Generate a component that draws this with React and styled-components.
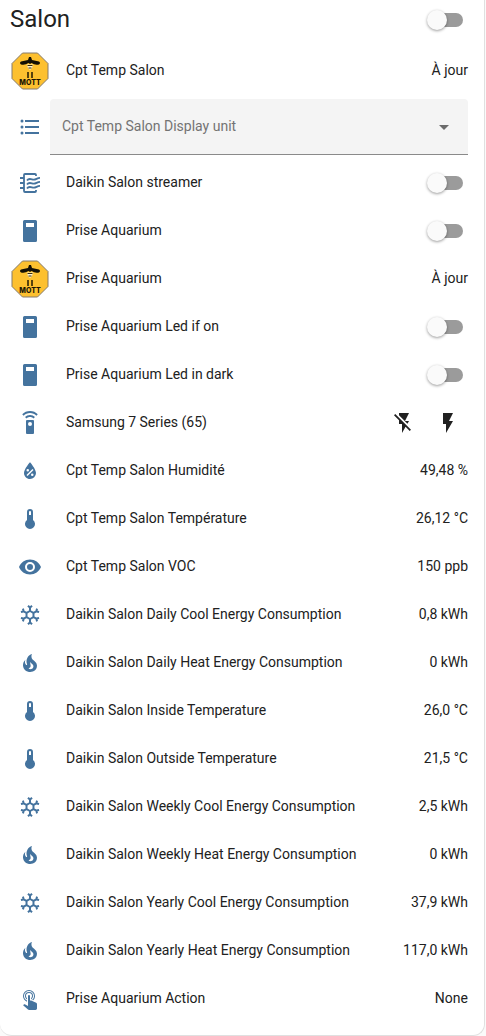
import React from 'react';
import styled, { createGlobalStyle } from 'styled-components';

const Global = createGlobalStyle`
  * { box-sizing: border-box; }
  body {
    margin: 0;
    background: #fafafa;
    color: #212121;
    font-family: Roboto, "Noto Sans", sans-serif;
    font-size: 14px;
    line-height: 20px;
  }
`;

const Card = styled.main`
  margin-right: 1px;
  padding-bottom: 17px;
  background: #fff;
  border: solid #e0e0e0;
  border-width: 0 1px 1px 0;
  border-radius: 0 0 12px 12px;
`;

const Header = styled.header`
  display: flex;
  align-items: center;
  justify-content: space-between;
  height: 38px;
  padding: 0 16px 0 10px;
`;

const Title = styled.h1`
  margin: 0;
  font-size: 24px;
  font-weight: 400;
  line-height: 32px;
`;

const Rows = styled.div`
  display: flex;
  flex-direction: column;
  gap: 8px;
  padding: 12px 16px 0 10px;
`;

const Row = styled.div`
  display: flex;
  align-items: center;
  min-height: 40px;
`;

const IconSlot = styled.span`
  display: flex;
  flex: none;
  align-items: center;
  justify-content: center;
  width: 40px;
  height: 40px;
  padding-top: 2px;
  color: #44739e;
`;

const Name = styled.label`
  flex: 1;
  min-width: 0;
  padding-left: 16px;
`;

const Value = styled.span`
  flex: none;
  white-space: nowrap;
`;

const Svg = styled.svg`
  display: block;
  fill: currentColor;
`;

const Switch = styled.input.attrs({ type: 'checkbox', role: 'switch' })`
  appearance: none;
  display: flex;
  flex: none;
  align-items: center;
  width: 36px;
  height: 20px;
  margin: 2px 5px 0 0;
  cursor: pointer;

  &::before {
    content: '';
    flex: none;
    width: 20px;
    height: 20px;
    border-radius: 50%;
    background: #fafafa;
    box-shadow: 0 1px 3px rgba(0, 0, 0, 0.4);
    z-index: 1;
  }
  &::after {
    content: '';
    flex: none;
    width: 34px;
    height: 14px;
    margin-left: -18px;
    border-radius: 7px;
    background: #9b9b9b;
  }
  &:checked::before { background: #03a9f4; }
`;

const SelectWrap = styled.div`
  display: grid;
  flex: 1;
  align-items: center;
  margin: 1px 0 -1px;
`;

const Select = styled.select`
  grid-area: 1 / 1;
  appearance: none;
  width: 100%;
  height: 56px;
  padding: 0 48px 2px 12px;
  border: 0;
  border-bottom: 1px solid #8a8a8a;
  border-radius: 4px 4px 0 0;
  background: #f4f4f4;
  color: #737373;
  font: inherit;
`;

const Arrow = styled(Svg)`
  grid-area: 1 / 1;
  justify-self: end;
  margin-right: 12px;
  color: #6b6b6b;
  pointer-events: none;
`;

const Actions = styled.div`
  display: flex;
  gap: 20px;
  margin: 2px 8px 0 0;
`;

const IconButton = styled.button`
  display: flex;
  padding: 0;
  border: 0;
  background: none;
  color: #212121;
  cursor: pointer;
`;

const paths = {
  list: 'M7,5H21V7H7V5M7,13V11H21V13H7M4,4.5A1.5,1.5 0 0,1 5.5,6A1.5,1.5 0 0,1 4,7.5A1.5,1.5 0 0,1 2.5,6A1.5,1.5 0 0,1 4,4.5M4,10.5A1.5,1.5 0 0,1 5.5,12A1.5,1.5 0 0,1 4,13.5A1.5,1.5 0 0,1 2.5,12A1.5,1.5 0 0,1 4,10.5M7,19V17H21V19H7M4,16.5A1.5,1.5 0 0,1 5.5,18A1.5,1.5 0 0,1 4,19.5A1.5,1.5 0 0,1 2.5,18A1.5,1.5 0 0,1 4,16.5Z',
  outlet: 'M6.500,1H17.500A1.500,1.500 0 0,1 19,2.500V21.500A1.500,1.500 0 0,1 17.500,23H6.500A1.500,1.500 0 0,1 5,21.500V2.500A1.500,1.500 0 0,1 6.500,1M8,4V8H16V4H8Z',
  remote: 'M12,0C8.96,0 6.21,1.23 4.22,3.22L5.63,4.63C7.26,3 9.5,2 12,2C14.5,2 16.74,3 18.36,4.64L19.77,3.23C17.79,1.23 15.04,0 12,0M7.05,6.05L8.46,7.46C9.37,6.56 10.62,6 12,6C13.38,6 14.63,6.56 15.54,7.46L16.95,6.05C15.68,4.78 13.93,4 12,4C10.07,4 8.32,4.78 7.05,6.05M12,15A2,2 0 0,1 10,13A2,2 0 0,1 12,11A2,2 0 0,1 14,13A2,2 0 0,1 12,15M15,9H9A1,1 0 0,0 8,10V22A1,1 0 0,0 9,23H15A1,1 0 0,0 16,22V10A1,1 0 0,0 15,9Z',
  humidity: 'M12,3.25C12,3.25 6,10 6,14C6,17.32 8.69,20 12,20A6,6 0 0,0 18,14C18,10 12,3.25 12,3.25M14.47,9.97L15.53,11.03L9.53,17.03L8.47,15.97M9.75,10A1.25,1.25 0 0,1 11,11.25A1.25,1.25 0 0,1 9.75,12.5A1.25,1.25 0 0,1 8.5,11.25A1.25,1.25 0 0,1 9.75,10M14.25,14.5A1.25,1.25 0 0,1 15.5,15.75A1.25,1.25 0 0,1 14.25,17A1.25,1.25 0 0,1 13,15.75A1.25,1.25 0 0,1 14.25,14.5Z',
  thermometer: 'M15 13V5A3 3 0 0 0 9 5V13A5 5 0 1 0 15 13M12 4A1 1 0 0 1 13 5V8H11V5A1 1 0 0 1 12 4Z',
  eye: 'M12,9A3,3 0 0,0 9,12A3,3 0 0,0 12,15A3,3 0 0,0 15,12A3,3 0 0,0 12,9M12,17A5,5 0 0,1 7,12A5,5 0 0,1 12,7A5,5 0 0,1 17,12A5,5 0 0,1 12,17M12,4.5C7,4.5 2.73,7.61 1,12C2.73,16.39 7,19.5 12,19.5C17,19.5 21.27,16.39 23,12C21.27,7.61 17,4.5 12,4.5Z',
  snow: 'M20.79,13.95L18.46,14.57L16.46,13.44V10.56L18.46,9.43L20.79,10.05L21.31,8.12L19.54,7.65L20,5.88L18.07,5.36L17.45,7.69L15.45,8.82L13,7.38V5.12L14.71,3.41L13.29,2L12,3.29L10.71,2L9.29,3.41L11,5.12V7.38L8.5,8.82L6.5,7.69L5.92,5.36L4,5.88L4.47,7.65L2.7,8.12L3.22,10.05L5.55,9.43L7.55,10.56V13.45L5.55,14.58L3.22,13.96L2.7,15.89L4.47,16.36L4,18.12L5.93,18.64L6.55,16.31L8.55,15.18L11,16.62V18.88L9.29,20.59L10.71,22L12,20.71L13.29,22L14.7,20.59L13,18.88V16.62L15.5,15.17L17.5,16.3L18.12,18.63L20,18.12L19.53,16.35L21.3,15.88L20.79,13.95M9.5,10.56L12,9.11L14.5,10.56V13.44L12,14.89L9.5,13.44V10.56Z',
  fire: 'M17.66 11.2C17.43 10.9 17.15 10.64 16.89 10.38C16.22 9.78 15.46 9.35 14.82 8.72C13.33 7.26 13 4.85 13.95 3C13 3.23 12.17 3.75 11.46 4.32C8.87 6.4 7.85 10.07 9.07 13.22C9.11 13.32 9.15 13.42 9.15 13.55C9.15 13.77 9 13.97 8.8 14.05C8.57 14.15 8.33 14.09 8.14 13.93C8.08 13.88 8.04 13.83 8 13.76C6.87 12.33 6.69 10.28 7.45 8.64C5.78 10 4.87 12.3 5 14.47C5.06 14.97 5.12 15.47 5.29 15.97C5.43 16.57 5.7 17.17 6 17.7C7.08 19.43 8.95 20.67 10.96 20.92C13.1 21.19 15.39 20.8 17.03 19.32C18.86 17.66 19.5 15 18.56 12.72L18.43 12.46C18.22 12 17.66 11.2 17.66 11.2M14.5 17.5C14.22 17.74 13.76 18 13.4 18.1C12.28 18.5 11.16 17.94 10.5 17.28C11.69 17 12.4 16.12 12.61 15.23C12.78 14.43 12.46 13.77 12.33 13C12.21 12.26 12.23 11.63 12.5 10.94C12.69 11.32 12.89 11.7 13.13 12C13.9 13 15.11 13.44 15.37 14.8C15.41 14.94 15.43 15.08 15.43 15.23C15.46 16.05 15.1 16.95 14.5 17.5Z',
  tap: 'M10,9A1,1 0 0,1 11,8A1,1 0 0,1 12,9V13.47L13.21,13.6L18.15,15.79C18.68,16.03 19,16.56 19,17.14V21.5C18.97,22.32 18.32,22.97 17.5,23H11C10.62,23 10.26,22.85 10,22.57L5.1,18.37L5.84,17.6C6.03,17.39 6.3,17.28 6.58,17.28H6.8L10,19V9M11,5A4,4 0 0,1 15,9C15,10.5 14.2,11.77 13,12.46V11.24C13.61,10.69 14,9.89 14,9A3,3 0 0,0 11,6A3,3 0 0,0 8,9C8,9.89 8.39,10.69 9,11.24V12.46C7.8,11.77 7,10.5 7,9A4,4 0 0,1 11,5M11,3A6,6 0 0,1 17,9C17,10.7 16.29,12.23 15.16,13.33L14.16,12.88C15.28,11.96 16,10.56 16,9A5,5 0 0,0 11,4A5,5 0 0,0 6,9C6,11.05 7.23,12.81 9,13.58V14.67C6.67,13.83 5,11.61 5,9A6,6 0 0,1 11,3Z',
  flash: 'M7,2V13H10V22L17,10H13L17,2H7Z',
  flashOff: 'M17,10H13L17,2H7V4.18L15.46,12.64M3.27,3L2,4.27L7,9.27V13H10V22L13.58,15.86L17.73,20L19,18.73L3.27,3Z',
};

const Icon = ({ name }) => (
  <Svg width="24" height="24" viewBox="0 0 24 24" aria-hidden="true">
    {name === 'filter' ? (
      <g fill="none" stroke="currentColor" strokeWidth="1.8">
        <path d="M18 5V4Q18 3 17 3H7Q6 3 6 4V20Q6 21 7 21H17Q18 21 18 20V19" />
        <path d="M2 7H6M2 12H6M2 17H6" />
        <path d="M9 9.500C11 6.500 13.500 8.500 15.500 8.700C18 8.900 19 6.800 22 6.800M9 13.500C11 10.500 13.500 12.500 15.500 12.700C18 12.900 19 10.800 22 10.800M9 17.500C11 14.500 13.500 16.500 15.500 16.700C18 16.900 19 14.800 22 14.800" />
      </g>
    ) : (
      <path fillRule="evenodd" d={paths[name]} />
    )}
  </Svg>
);

const BadgeText = styled.text`
  font: 800 7px Inter, sans-serif;
  fill: #1b1505;
  text-anchor: middle;
`;

const Badge = () => (
  <Svg width="38" height="38" viewBox="0 0 38 38" role="img" aria-label="Mott">
    <path d="M11.5 1H26.5L37 11.5V26.5L26.5 37H11.5L1 26.5V11.5Z" fill="#fdc02f" stroke="#857b6c" />
    <path d="M18 5H20L21 8L28 9.500Q30 11 28 12.500Q24 13.500 20.500 11L19 12L17.500 11Q14 13.500 10 12.500Q8 11 10 9.500L17 8Z" fill="#130f04" />
    <path d="M16 12.500H22L21 16L19 18L17 16Z" fill="#fff2cf" />
    <path d="M16.500 13.500H21.500M17.500 16H20.500" stroke="#3b2c08" />
    <path d="M17 20V26M21 20V26" stroke="#211904" strokeWidth="1.5" />
    <BadgeText x="19" y="33">MOTT</BadgeText>
  </Svg>
);

const rows = [
  { icon: 'badge', name: 'Cpt Temp Salon', value: 'À jour' },
  { icon: 'list', name: 'Cpt Temp Salon Display unit', kind: 'select' },
  { icon: 'filter', name: 'Daikin Salon streamer', kind: 'switch' },
  { icon: 'outlet', name: 'Prise Aquarium', kind: 'switch' },
  { icon: 'badge', name: 'Prise Aquarium', value: 'À jour' },
  { icon: 'outlet', name: 'Prise Aquarium Led if on', kind: 'switch' },
  { icon: 'outlet', name: 'Prise Aquarium Led in dark', kind: 'switch' },
  { icon: 'remote', name: 'Samsung 7 Series (65)', kind: 'power' },
  { icon: 'humidity', name: 'Cpt Temp Salon Humidité', value: '49,48 %' },
  { icon: 'thermometer', name: 'Cpt Temp Salon Température', value: '26,12 °C' },
  { icon: 'eye', name: 'Cpt Temp Salon VOC', value: '150 ppb' },
  { icon: 'snow', name: 'Daikin Salon Daily Cool Energy Consumption', value: '0,8 kWh' },
  { icon: 'fire', name: 'Daikin Salon Daily Heat Energy Consumption', value: '0 kWh' },
  { icon: 'thermometer', name: 'Daikin Salon Inside Temperature', value: '26,0 °C' },
  { icon: 'thermometer', name: 'Daikin Salon Outside Temperature', value: '21,5 °C' },
  { icon: 'snow', name: 'Daikin Salon Weekly Cool Energy Consumption', value: '2,5 kWh' },
  { icon: 'fire', name: 'Daikin Salon Weekly Heat Energy Consumption', value: '0 kWh' },
  { icon: 'snow', name: 'Daikin Salon Yearly Cool Energy Consumption', value: '37,9 kWh' },
  { icon: 'fire', name: 'Daikin Salon Yearly Heat Energy Consumption', value: '117,0 kWh' },
  { icon: 'tap', name: 'Prise Aquarium Action', value: 'None' },
];

function EntityRow({ id, icon, name, value, kind }) {
  return (
    <Row>
      <IconSlot>{icon === 'badge' ? <Badge /> : <Icon name={icon} />}</IconSlot>
      {kind === 'select' ? (
        <SelectWrap>
          <Select aria-label={name} defaultValue="">
            <option value="">{name}</option>
          </Select>
          <Arrow width="24" height="24" viewBox="0 0 24 24" aria-hidden="true">
            <path d="M7 10L12 15L17 10Z" />
          </Arrow>
        </SelectWrap>
      ) : (
        <Name as={kind === 'switch' ? 'label' : 'span'} htmlFor={kind === 'switch' ? id : undefined}>
          {name}
        </Name>
      )}
      {value && <Value>{value}</Value>}
      {kind === 'switch' && <Switch id={id} />}
      {kind === 'power' && (
        <Actions>
          <IconButton type="button" aria-label="Turn off"><Icon name="flashOff" /></IconButton>
          <IconButton type="button" aria-label="Turn on"><Icon name="flash" /></IconButton>
        </Actions>
      )}
    </Row>
  );
}

export default function App() {
  return (
    <>
      <Global />
      <Card>
        <Header>
          <Title>Salon</Title>
          <Switch aria-label="Salon" />
        </Header>
        <Rows>
          {rows.map((row, i) => <EntityRow key={i} id={`entity-${i}`} {...row} />)}
        </Rows>
      </Card>
    </>
  );
}
